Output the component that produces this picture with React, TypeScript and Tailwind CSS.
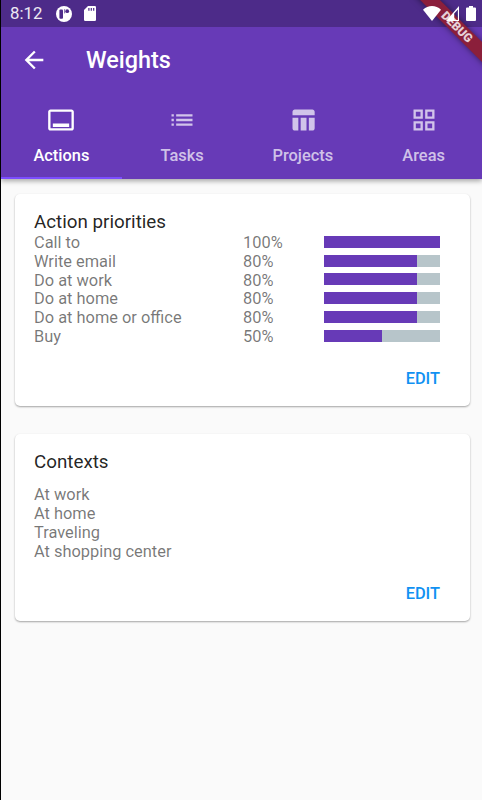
import type { ReactNode } from "react";
import { clsx } from "clsx";

const priorities = [
  { name: "Call to", weight: 100 },
  { name: "Write email", weight: 80 },
  { name: "Do at work", weight: 80 },
  { name: "Do at home", weight: 80 },
  { name: "Do at home or office", weight: 80 },
  { name: "Buy", weight: 50 },
];

const contexts = ["At work", "At home", "Traveling", "At shopping center"];

const tabs = [
  {
    label: "Actions",
    path: "M21 3H3c-1.1 0-2 .9-2 2v14c0 1.1.9 2 2 2h18c1.1 0 2-.9 2-2V5c0-1.1-.9-2-2-2zm0 16H3V5h18v14zM5 15h14v3H5z",
  },
  {
    label: "Tasks",
    path: "M3 13h2v-2H3v2zm0 4h2v-2H3v2zm0-8h2V7H3v2zm4 4h14v-2H7v2zm0 4h14v-2H7v2zM7 7v2h14V7H7z",
  },
  {
    label: "Projects",
    path: "M10 10.02h5V21h-5V10.02zM17 21h3c1.1 0 2-.9 2-2v-9h-5v11zm3-18H5c-1.1 0-2 .9-2 2v3h19V5c0-1.1-.9-2-2-2zM3 19c0 1.1.9 2 2 2h3V10H3v9z",
  },
  {
    label: "Areas",
    path: "M3 3v8h8V3H3zm6 6H5V5h4v4zm-6 4v8h8v-8H3zm6 6H5v-4h4v4zm4-16v8h8V3h-8zm6 6h-4V5h4v4zm-6 4v8h8v-8h-8zm6 6h-4v-4h4v4z",
  },
];

const Icon = ({ path }: { path: string }) => (
  <svg viewBox="0 0 24 24" className="size-7 shrink-0" fill="currentColor">
    <path d={path} />
  </svg>
);

// Sits above the debug ribbon, so its background is drawn by the header
const StatusBar = () => (
  <div className="absolute inset-x-0 top-0 z-30 flex h-[27px] items-center pr-[6px] pl-[9px] text-white">
    <span className="w-[46px] text-[16.8px] leading-[27px] text-white/90">
      8:12
    </span>
    <svg viewBox="0 0 16 16" className="size-4" fill="none">
      <circle cx="8" cy="8" r="8" fill="white" />
      <path
        d="M3.400 4.400q0-1 1-1h1.600q1 0 1 1v7.400q0 1-1 1h-1.600q-1 0-1-1z"
        fill="#4d2b89"
      />
      <path d="M8.600 3.200v4.200" stroke="#4d2b89" strokeWidth="0.700" />
      <circle cx="11.200" cy="5.200" r="1.900" fill="#4d2b89" />
    </svg>
    <svg viewBox="0 0 12 15" className="ml-3 h-[15px] w-3">
      <path
        d="M4 0h6.800q1.200 0 1.200 1.200v12.600q0 1.200-1.200 1.200H1.200Q0 15 0 13.800V4z"
        fill="white"
      />
      <path
        d="M4.300 2h1.200v2.800H4.300zM6.700 2h1.200v2.800H6.700zM9.100 2h1.200v2.800H9.100z"
        fill="#4d2b89"
      />
    </svg>
    <div className="ml-auto flex items-center">
      <svg viewBox="0 0 18 15" className="h-[15px] w-[18px]" fill="white">
        <path d="M9 15 0 3.700Q4 0 9 0t9 3.700z" />
      </svg>
      <svg viewBox="0 0 13 15" className="ml-[5px] h-[15px] w-[13px]">
        <path
          d="M13 0v15H0zM11.900 3.400 8.200 7.600v6.300h3.700z"
          fill="white"
          fillRule="evenodd"
        />
      </svg>
      <svg viewBox="0 0 10 15" className="ml-[7px] h-[15px] w-[10px]" fill="white">
        <path d="M3 0h4v1.500h2q1 0 1 1V14q0 1-1 1H1q-1 0-1-1V2.500q0-1 1-1h2z" />
      </svg>
    </div>
  </div>
);

const Card = ({
  title,
  className,
  children,
}: {
  title: string;
  className?: string;
  children: ReactNode;
}) => (
  <section
    className={clsx(
      "flex flex-col rounded-[5px] bg-white pr-[30px] pl-[19px] shadow-[0_1px_2px_rgba(0,0,0,0.35)]",
      className,
    )}
  >
    <h2 className="text-[18.8px] leading-[22px] text-black/87">{title}</h2>
    {children}
    <button className="mt-auto mb-4 self-end text-[16.4px] leading-[22px] font-medium text-[#1091f2]">
      EDIT
    </button>
  </section>
);

export default function App() {
  return (
    <div className="relative flex h-[800px] w-[482px] flex-col overflow-hidden border-l border-black bg-[#fafafa] font-[Roboto,sans-serif]">
      <StatusBar />

      <header className="z-10 h-[179px] shrink-0 border-t-[27px] border-[#4d2b89] bg-[#673ab7] text-white shadow-[0_2px_5px_rgba(0,0,0,0.35)]">
        <div className="flex h-[66px] items-center pl-[19px]">
          <Icon path="M20 11H7.830l5.590-5.590L12 4l-8 8 8 8 1.410-1.410L7.830 13H20v-2z" />
          <h1 className="ml-[38px] pt-[2px] text-[23.4px] font-medium">
            Weights
          </h1>
        </div>
        <nav className="grid h-[86px] w-[483px] grid-cols-4">
          {tabs.map((tab, index) => (
            <button
              key={tab.label}
              className={clsx(
                "flex flex-col items-center border-b-2 pt-[13px] text-[16.4px] leading-[20px] font-medium",
                index === 0
                  ? "border-[#7c4dff] text-white"
                  : "border-transparent text-white/70",
              )}
            >
              <Icon path={tab.path} />
              <span className="mt-3">{tab.label}</span>
            </button>
          ))}
        </nav>
      </header>

      <main className="flex flex-col gap-7 pt-[15px] pr-3 pl-[14px] text-[16.4px] leading-[18.8px] text-black/54">
        <Card title="Action priorities" className="h-[212px] pt-[17px]">
          <div className="pt-px">
            {priorities.map(({ name, weight }) => (
              <div key={name} className="flex h-[18.8px]">
                <span className="w-[209px]">{name}</span>
                <span className="w-[81px]">{weight}%</span>
                <div className="mt-[1.8px] h-3 flex-1 bg-[#b7c5ca]">
                  <div
                    className="h-full bg-[#673ab7]"
                    style={{ width: `${weight}%` }}
                  />
                </div>
              </div>
            ))}
          </div>
        </Card>

        <Card title="Contexts" className="h-[187px] pt-[17px]">
          <ul className="mt-[13.2px]">
            {contexts.map((context) => (
              <li key={context}>{context}</li>
            ))}
          </ul>
        </Card>
      </main>

      {/* Debug ribbon */}
      <div className="absolute top-[20px] right-[-35px] z-20 flex h-[14px] w-[120px] rotate-45 items-center justify-center bg-[#8b1f3b] text-[12px] font-black text-white/80 shadow-[0_0_6px_rgba(0,0,0,0.5)]">
        DEBUG
      </div>
    </div>
  );
}
